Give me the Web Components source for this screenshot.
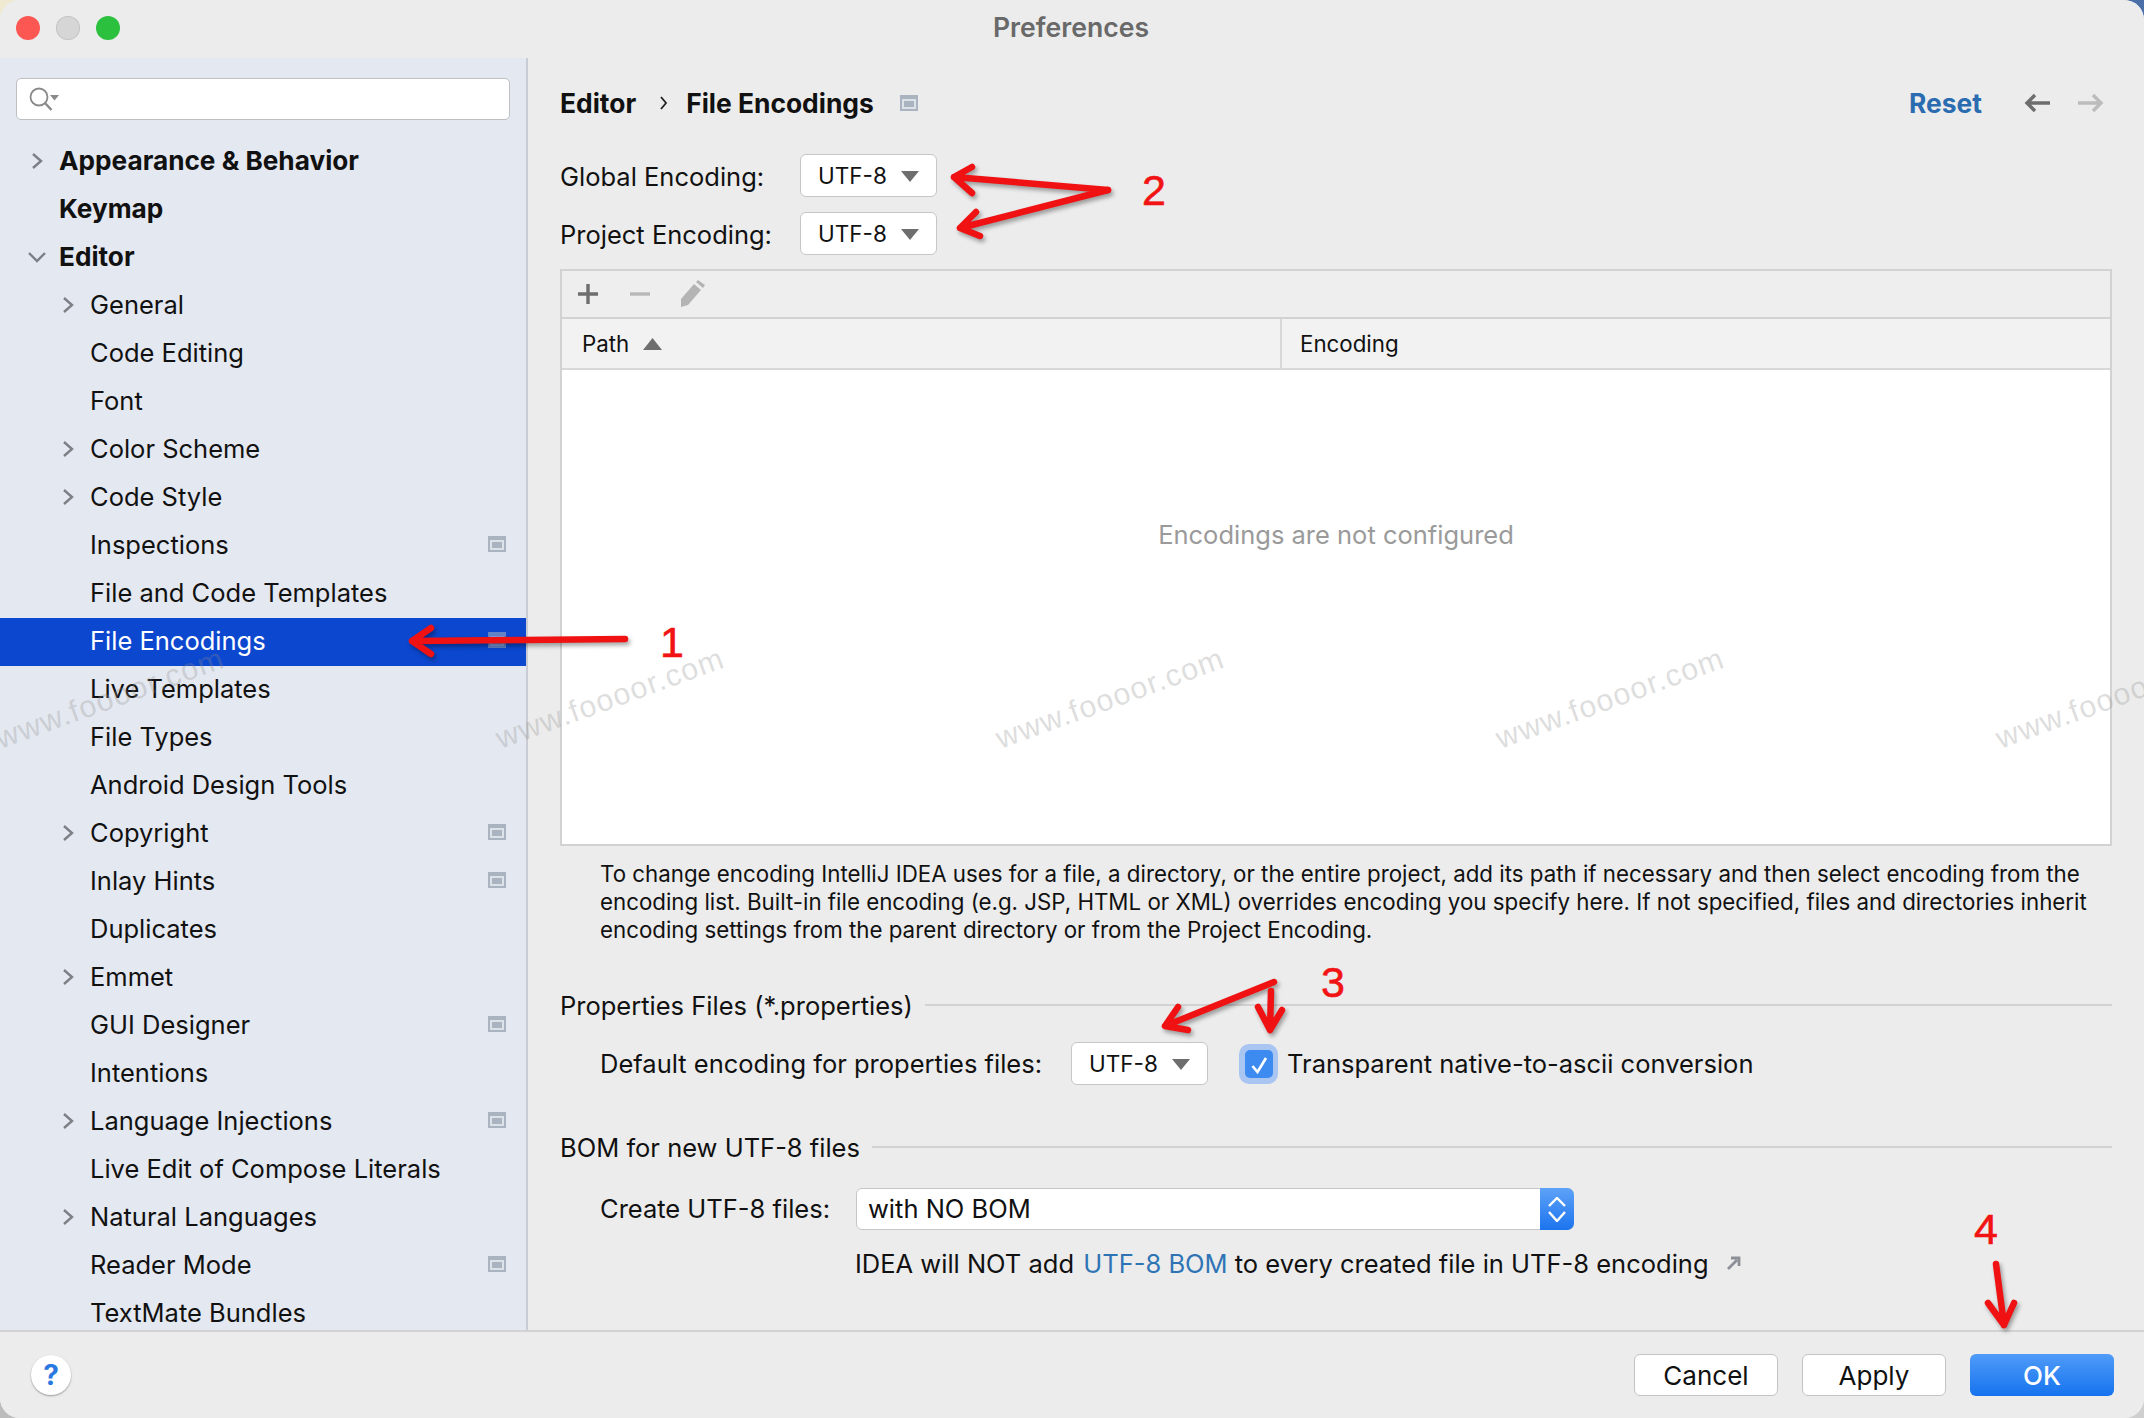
<!DOCTYPE html>
<html lang="en">
<head>
<meta charset="UTF-8">
<title>Preferences</title>
<style>
    html, body { margin: 0; padding: 0; background: #d9d6cf; }
    body { font-family: Inter, "Noto Sans", sans-serif; font-size: 25.5px; color: #111; }
</style>
</head>
<body>
<pref-window>
    <title-bar slot="top">Preferences</title-bar>

    <settings-tree slot="side">
        <tree-item chevron="right" bold>Appearance &amp; Behavior</tree-item>
        <tree-item bold>Keymap</tree-item>
        <tree-item chevron="down" bold>Editor</tree-item>
        <tree-item sub chevron="right">General</tree-item>
        <tree-item sub>Code Editing</tree-item>
        <tree-item sub>Font</tree-item>
        <tree-item sub chevron="right">Color Scheme</tree-item>
        <tree-item sub chevron="right">Code Style</tree-item>
        <tree-item sub badge>Inspections</tree-item>
        <tree-item sub>File and Code Templates</tree-item>
        <tree-item sub badge selected>File Encodings</tree-item>
        <tree-item sub>Live Templates</tree-item>
        <tree-item sub>File Types</tree-item>
        <tree-item sub>Android Design Tools</tree-item>
        <tree-item sub chevron="right" badge>Copyright</tree-item>
        <tree-item sub badge>Inlay Hints</tree-item>
        <tree-item sub>Duplicates</tree-item>
        <tree-item sub chevron="right">Emmet</tree-item>
        <tree-item sub badge>GUI Designer</tree-item>
        <tree-item sub>Intentions</tree-item>
        <tree-item sub chevron="right" badge>Language Injections</tree-item>
        <tree-item sub>Live Edit of Compose Literals</tree-item>
        <tree-item sub chevron="right">Natural Languages</tree-item>
        <tree-item sub badge>Reader Mode</tree-item>
        <tree-item sub>TextMate Bundles</tree-item>
    </settings-tree>

    <encoding-panel slot="main"></encoding-panel>

    <dialog-footer slot="bottom"></dialog-footer>

    <note-overlay slot="over"></note-overlay>
</pref-window>

<script>
    const badgeSvg = `<svg width="18" height="16" viewBox="0 0 18 16"><rect width="18" height="16" fill="#a9b4c0"/><rect x="2" y="4" width="14" height="10" fill="#dde2e9"/><rect x="4" y="6" width="10" height="6" fill="#a9b4c0"/></svg>`;

    class PrefWindow extends HTMLElement {
        constructor() {
            super();
            this.attachShadow({ mode: "open" }).innerHTML = `
                <style>
                    :host { display: block; position: relative; width: 2144px; height: 1418px; overflow: hidden; background: conic-gradient(#4a6ea8 0 25%, #cfcfcf 25% 50%, #bcbcbc 50% 75%, #efe9d2 75%); }
                    .win { display: flex; flex-direction: column; height: 100%; background: #ececec; border-radius: 20px; overflow: hidden; }
                    .body { display: flex; height: 1272px; }
                </style>
                <div class="win">
                    <slot name="top"></slot>
                    <div class="body"><slot name="side"></slot><slot name="main"></slot></div>
                    <slot name="bottom"></slot>
                </div>
                <slot name="over"></slot>`;
        }
    }

    class TitleBar extends HTMLElement {
        constructor() {
            super();
            this.attachShadow({ mode: "open" }).innerHTML = `
                <style>
                    :host { display: flex; align-items: center; justify-content: center; position: relative; height: 58px; flex: none; background: #ececec; color: #696969; font-weight: 600; font-size: 26.6px; }
                    .lights { position: absolute; left: 16px; top: 16px; display: flex; gap: 16px; }
                    .lights i { display: block; width: 24px; height: 24px; border-radius: 50%; }
                    .r { background: #fc5753; } .g { background: #d6d6d6; box-shadow: inset 0 0 0 1px #c6c6c6; } .v { background: #2bc13f; }
                    .t { margin-left: -2px; margin-top: -4px; }
                </style>
                <div class="lights"><i class="r"></i><i class="g"></i><i class="v"></i></div>
                <span class="t"><slot></slot></span>`;
        }
    }

    class SettingsTree extends HTMLElement {
        constructor() {
            super();
            this.attachShadow({ mode: "open" }).innerHTML = `
                <style>
                    :host { display: block; width: 528px; flex: none; box-sizing: border-box; background: #e4e8f0; border-right: 2px solid #c9cdd3; overflow: hidden; height: 1272px; }
                    .search { display: flex; align-items: center; box-sizing: border-box; height: 42px; margin: 20px 16px 18px 16px; background: #fff; border: 1px solid #bdbfc3; border-radius: 5px; padding-left: 10px; }
                    .list { display: flex; flex-direction: column; }
                </style>
                <div class="search">
                    <svg width="34" height="28" viewBox="0 0 34 28" fill="none">
                        <circle cx="12" cy="12" r="8.5" stroke="#8a8a8a" stroke-width="1.8"/>
                        <path d="M18 18l6.500 7" stroke="#8a8a8a" stroke-width="2.4"/>
                        <path d="M23 10h9l-4.500 5.500z" fill="#8a8a8a"/>
                    </svg>
                </div>
                <div class="list"><slot></slot></div>`;
        }
    }

    class TreeItem extends HTMLElement {
        constructor() {
            super();
            const chevron = this.getAttribute("chevron");
            const sub = this.hasAttribute("sub");
            const selected = this.hasAttribute("selected");
            let icon = "";
            if (chevron === "right") icon = `<svg width="12" height="18" viewBox="0 0 12 18" fill="none"><path d="M2 2l8 7-8 7" stroke="#7c7f84" stroke-width="2.4"/></svg>`;
            if (chevron === "down") icon = `<svg width="18" height="12" viewBox="0 0 18 12" fill="none"><path d="M1 2l8 8 8-8" stroke="#7c7f84" stroke-width="2.4"/></svg>`;
            this.attachShadow({ mode: "open" }).innerHTML = `
                <style>
                    :host { display: flex; align-items: center; height: 48px; flex: none; position: relative; }
                    :host([bold]) { font-weight: 700; font-size: 26.2px; }
                    :host([selected]) { background: #0b47cf; color: #fff; }
                    .arrow { display: flex; align-items: center; justify-content: center; width: 18px; height: 48px; margin-left: ${sub ? 59 : 28}px; margin-top: -2px; }
                    .label { margin-left: 13px; white-space: nowrap; margin-top: -3px; }
                    .badge { position: absolute; left: 488px; top: 14px; line-height: 0; opacity: ${selected ? 0.55 : 1}; }
                </style>
                <span class="arrow">${icon}</span>
                <span class="label"><slot></slot></span>
                ${this.hasAttribute("badge") ? `<span class="badge">${badgeSvg}</span>` : ""}`;
        }
    }

    class ComboBox extends HTMLElement {
        constructor() {
            super();
            this.attachShadow({ mode: "open" }).innerHTML = `
                <style>
                    :host { display: inline-flex; align-items: center; justify-content: space-between; box-sizing: border-box; width: 137px; height: 43px; padding: 0 17px 0 17px; background: #fff; border: 1px solid #c6c6c6; border-radius: 6px; font-size: 22.5px; flex: none; }
                </style>
                <slot></slot>
                <svg width="18" height="12" viewBox="0 0 18 12"><path d="M0 1h18L9 12z" fill="#6e6e6e"/></svg>`;
        }
    }

    class GroupTitle extends HTMLElement {
        constructor() {
            super();
            this.attachShadow({ mode: "open" }).innerHTML = `
                <style>
                    :host { display: flex; align-items: center; gap: 12px; height: 40px; white-space: nowrap; }
                    i { flex: 1; height: 2px; background: #d2d2d2; }
                </style>
                <slot></slot><i></i>`;
        }
    }

    class PathTable extends HTMLElement {
        constructor() {
            super();
            this.attachShadow({ mode: "open" }).innerHTML = `
                <style>
                    :host { display: flex; flex-direction: column; box-sizing: border-box; height: 577px; border: 2px solid #d2d2d2; flex: none; }
                    .tools { display: flex; align-items: center; gap: 26px; height: 48px; padding-left: 14px; background: #eeeeee; border-bottom: 2px solid #d2d2d2; flex: none; box-sizing: border-box; }
                    .head { display: flex; height: 51px; background: #f2f2f2; border-bottom: 2px solid #d8d8d8; flex: none; font-size: 22.3px; align-items: center; box-sizing: border-box; }
                    .head div { display: flex; align-items: center; height: 100%; box-sizing: border-box; }
                    .path { width: 720px; padding-left: 20px; gap: 14px; border-right: 2px solid #d8d8d8; }
                    .enc { padding-left: 18px; }
                    .rows { flex: 1; background: #fff; display: flex; align-items: center; justify-content: center; color: #9a9a9a; padding-bottom: 146px; }
                </style>
                <div class="tools">
                    <svg width="24" height="24" viewBox="0 0 24 24"><path d="M12 2v20M2 12h20" stroke="#6e6e6e" stroke-width="3.4"/></svg>
                    <svg width="30" height="24" viewBox="0 0 30 24"><path d="M4 12h20" stroke="#b8b8b8" stroke-width="3.4"/></svg>
                    <svg width="28" height="28" viewBox="0 0 28 28" style="margin-left:-3px"><path d="M2 27V19L15 4l7 6-13 15z" fill="#b4b4b4"/><path d="M17 2l2-2 7 5-2 3z" fill="#b4b4b4"/></svg>
                </div>
                <div class="head">
                    <div class="path">Path <svg width="19" height="12" viewBox="0 0 19 12"><path d="M0 12L9.500 0 19 12z" fill="#6e6e6e"/></svg></div>
                    <div class="enc">Encoding</div>
                </div>
                <div class="rows"><slot></slot></div>`;
        }
    }

    class EncodingPanel extends HTMLElement {
        constructor() {
            super();
            this.attachShadow({ mode: "open" }).innerHTML = `
                <style>
                    :host { display: flex; flex-direction: column; flex: 1; box-sizing: border-box; padding: 0 32px 0 32px; min-width: 0; }
                    .crumb { display: flex; align-items: center; height: 44px; margin-top: 23px; font-weight: 700; font-size: 26.4px; }
                    .crumb .sep { margin: 0 18px 0 24px; line-height: 0; }
                    .crumb .bdg { margin-left: 26px; line-height: 0; }
                    .crumb .reset { margin-left: auto; color: #2b6cb0; }
                    .crumb .nav { display: flex; gap: 28px; margin-left: 42px; margin-right: 8px; line-height: 0; }
                    .row { display: flex; align-items: center; }
                    .enc-row { height: 43px; }
                    .enc-row span { width: 240px; padding-top: 2px; }
                    .help { font-size: 22.3px; line-height: 28px; padding-left: 40px; white-space: nowrap; margin-top: 14px; height: 84px; }
                    .props { margin-top: 41px; }
                    .indent { padding-left: 40px; }
                    .check { display: flex; align-items: center; justify-content: center; width: 39px; height: 40px; margin-left: 31px; margin-right: 9px; background: #a9c6f3; border-radius: 10px; }
                    .check i { display: flex; align-items: center; justify-content: center; width: 28px; height: 28px; background: #3d8bf0; border-radius: 5px; }
                    .bom-box { display: flex; align-items: center; box-sizing: border-box; width: 718px; height: 42px; margin-left: 26px; background: #fff; border: 1px solid #c6c6c6; border-radius: 6px; padding-left: 11px; position: relative; }
                    .bom-box b { position: absolute; right: -1px; top: -1px; bottom: -1px; width: 34px; display: flex; align-items: center; justify-content: center; background: linear-gradient(#5ea2f8, #1c74ee); border-radius: 0 7px 7px 0; }
                    .note { margin-left: 295px; margin-top: 18px; height: 30px; display: flex; align-items: center; white-space: pre; }
                    .note a { color: #2e74b5; margin-left: 2px; }
                    .note svg { margin-left: 18px; }
                </style>
                <div class="crumb">
                    <span>Editor</span>
                    <span class="sep"><svg width="8" height="14" viewBox="0 0 8 14" fill="none"><path d="M1 1l5 6-5 6" stroke="#222" stroke-width="1.800"/></svg></span>
                    <span>File Encodings</span>
                    <span class="bdg">${badgeSvg}</span>
                    <span class="reset">Reset</span>
                    <span class="nav">
                        <svg width="26" height="20" viewBox="0 0 26 20" fill="none"><path d="M26 10H3M11 2l-8 8 8 8" stroke="#6d6d6d" stroke-width="3.4"/></svg>
                        <svg width="26" height="20" viewBox="0 0 26 20" fill="none"><path d="M0 10h23M15 2l8 8-8 8" stroke="#bcbcbc" stroke-width="3.4"/></svg>
                    </span>
                </div>
                <div class="row enc-row" style="margin-top:29px"><span>Global Encoding:</span><combo-box>UTF-8</combo-box></div>
                <div class="row enc-row" style="margin-top:15px"><span>Project Encoding:</span><combo-box>UTF-8</combo-box></div>
                <path-table style="margin-top:14px">Encodings are not configured</path-table>
                <div class="help">To change encoding IntelliJ IDEA uses for a file, a directory, or the entire project, add its path if necessary and then select encoding from the<br>encoding list. Built-in file encoding (e.g. JSP, HTML or XML) overrides encoding you specify here. If not specified, files and directories inherit<br>encoding settings from the parent directory or from the Project Encoding.</div>
                <group-title class="props">Properties Files (*.properties)</group-title>
                <div class="row indent" style="margin-top:17px;height:43px">
                    <span style="margin-right:29px;margin-top:-1px">Default encoding for properties files:</span>
                    <combo-box>UTF-8</combo-box>
                    <span class="check"><i><svg width="28" height="28" viewBox="0 0 28 28" fill="none"><path d="M7.500 16l5 6 8.500-14" stroke="#fff" stroke-width="2.600"/></svg></i></span>
                    <span style="margin-top:-1px">Transparent native-to-ascii conversion</span>
                </div>
                <group-title style="margin-top:42px">BOM for new UTF-8 files</group-title>
                <div class="row indent" style="margin-top:21px;height:42px">
                    <span style="margin-top:-1px">Create UTF-8 files:</span>
                    <span class="bom-box"><span style="margin-top:-2px">with NO BOM</span><b><svg width="18" height="25" viewBox="0 0 18 25" fill="none"><path d="M1 9l8-8 8 8M1 15l8 9 8-9" stroke="#fff" stroke-width="2.400"/></svg></b></span>
                </div>
                <div class="note"><span>IDEA will NOT add </span><a>UTF-8 BOM</a><span> to every created file in UTF-8 encoding</span><svg width="14" height="14" viewBox="0 0 14 14" fill="none"><path d="M1 13L10 4M4 2h8v8" stroke="#8c9096" stroke-width="2.800"/></svg></div>`;
        }
    }

    class MacButton extends HTMLElement {
        constructor() {
            super();
            this.attachShadow({ mode: "open" }).innerHTML = `
                <style>
                    :host { display: flex; align-items: center; justify-content: center; box-sizing: border-box; width: 144px; height: 42px; background: #fff; border: 1px solid #c4c4c4; border-radius: 6px; font-size: 26px; }
                    :host([primary]) { background: linear-gradient(#4f9bf8, #1673ee); border: none; color: #fff; font-weight: 500; }
                </style>
                <slot></slot>`;
        }
    }

    class DialogFooter extends HTMLElement {
        constructor() {
            super();
            this.attachShadow({ mode: "open" }).innerHTML = `
                <style>
                    :host { display: flex; align-items: center; box-sizing: border-box; height: 88px; flex: none; background: #ececec; border-top: 2px solid #d2d2d2; padding: 0 30px 0 31px; }
                    .help { display: flex; align-items: center; justify-content: center; width: 40px; height: 40px; background: #fff; border-radius: 50%; color: #2a78e0; font-weight: 700; font-size: 28px; box-shadow: 0 1px 2px rgba(0,0,0,.35); }
                    .btns { display: flex; gap: 24px; margin-left: auto; }
                </style>
                <span class="help">?</span>
                <div class="btns">
                    <mac-button>Cancel</mac-button>
                    <mac-button>Apply</mac-button>
                    <mac-button primary>OK</mac-button>
                </div>`;
        }
    }

    // watermark + red notes lie over the whole dialog
    class NoteOverlay extends HTMLElement {
        constructor() {
            super();
            const marks = [110, 610, 1110, 1610, 2110].map(x =>
                `<span class="wm" style="left:${x}px">www.foooor.com</span>`).join("");
            const nums = [["1", 672, 642], ["2", 1154, 190], ["3", 1333, 982], ["4", 1986, 1229]].map(n =>
                `<span class="num" style="left:${n[1]}px;top:${n[2]}px">${n[0]}</span>`).join("");
            this.attachShadow({ mode: "open" }).innerHTML = `
                <style>
                    :host { position: absolute; inset: 0; display: block; pointer-events: none; }
                    .wm { position: absolute; top: 698px; transform: translate(-50%, -50%) rotate(-20deg); font: 30.500px "Liberation Sans", sans-serif; color: rgba(140,140,140,.3); white-space: nowrap; letter-spacing: 1.200px; }
                    .num { position: absolute; transform: translate(-50%, -50%); font: 43px "Liberation Sans", sans-serif; color: #f21414; -webkit-text-stroke: .6px #f21414; }
                    svg { position: absolute; left: 0; top: 0; filter: drop-shadow(2px 3px 2px rgba(0,0,0,.35)); }
                    path { fill: none; stroke: #f01212; stroke-width: 6.500; stroke-linecap: round; stroke-linejoin: round; }
                </style>
                ${marks}
                <svg width="2144" height="1418" viewBox="0 0 2144 1418">
                    <path d="M625 639L412 641M431 628L412 641L431 654"/>
                    <path d="M1108 190L954 177M972 167L954 177L972 193"/>
                    <path d="M1108 190L960 228M976 212L960 228L980 236"/>
                    <path d="M1274 982L1165 1026M1178 1007L1165 1026L1188 1030"/>
                    <path d="M1271 991L1270 1030M1258 1007L1270 1030L1282 1010"/>
                    <path d="M1996 1264L2004 1325M1988 1303L2004 1325L2014 1303"/>
                </svg>
                ${nums}`;
        }
    }

    customElements.define("tree-item", TreeItem);
    customElements.define("settings-tree", SettingsTree);
    customElements.define("title-bar", TitleBar);
    customElements.define("combo-box", ComboBox);
    customElements.define("group-title", GroupTitle);
    customElements.define("path-table", PathTable);
    customElements.define("encoding-panel", EncodingPanel);
    customElements.define("mac-button", MacButton);
    customElements.define("dialog-footer", DialogFooter);
    customElements.define("note-overlay", NoteOverlay);
    customElements.define("pref-window", PrefWindow);
</script>
</body>
</html>
